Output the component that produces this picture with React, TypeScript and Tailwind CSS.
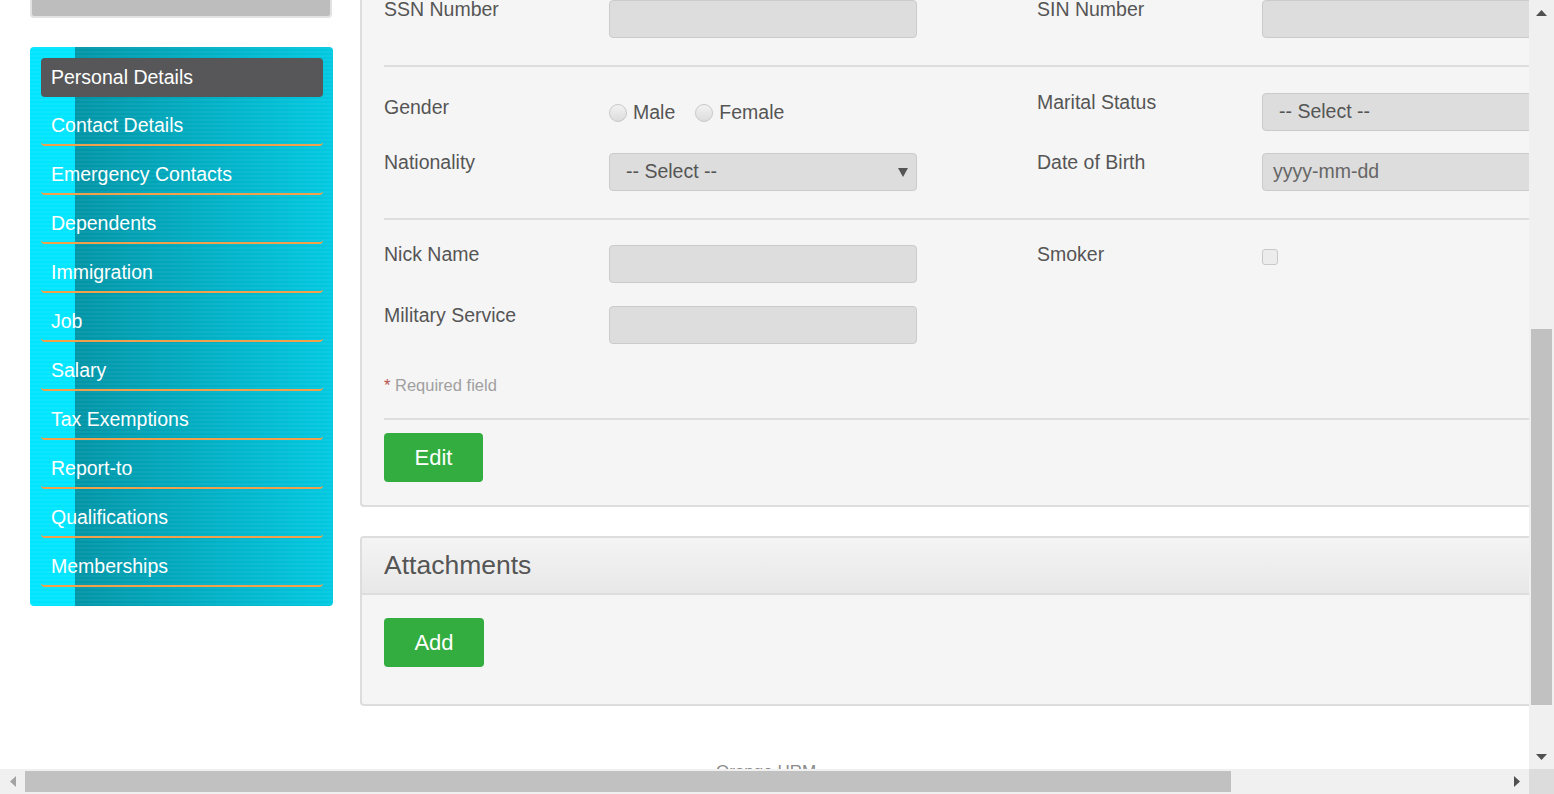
import React from 'react';

const menuItems = [
  'Contact Details',
  'Emergency Contacts',
  'Dependents',
  'Immigration',
  'Job',
  'Salary',
  'Tax Exemptions',
  'Report-to',
  'Qualifications',
  'Memberships',
];

const TextInput = ({ placeholder }: { placeholder?: string }) => (
  <div className="w-[308px] h-[38px] shrink-0 rounded-[4px] border border-[#cbcbcb] bg-[#dddddd] flex items-center pl-[10px] text-[19.5px] text-[#666]">
    {placeholder}
  </div>
);

const SelectBox = ({ arrow = true }: { arrow?: boolean }) => (
  <div className="w-[308px] h-[38px] shrink-0 rounded-[4px] border border-[#cbcbcb] bg-[#dddddd] flex items-center justify-between pl-[16px] pr-[8px] text-[19.5px] text-[#555]">
    <span>-- Select --</span>
    {arrow && (
      <svg width="10" height="9" viewBox="0 0 10 9">
        <polygon points="0,0 10,0 5,9" fill="#555" />
      </svg>
    )}
  </div>
);

const Label = ({ children }: { children: React.ReactNode }) => (
  <div className="w-[225px] shrink-0 leading-[18px] text-[19.5px] text-[#555]">{children}</div>
);

const Radio = ({ label }: { label: string }) => (
  <label className="flex items-center gap-[6px] mr-[20px]">
    <span className="w-[18px] h-[18px] rounded-full border border-[#c8c8c8] bg-[linear-gradient(180deg,#f2f2f2,#dcdcdc)]" />
    <span className="text-[19.5px] text-[#555]">{label}</span>
  </label>
);

const Divider = () => <div className="h-[2px] bg-[#dddddd]" />;

export default function App() {
  return (
    <div className="w-[1554px] h-[794px] flex flex-col overflow-hidden bg-white font-['Liberation_Sans',Arial,sans-serif]">
      <div className="flex flex-1 min-h-0">
        {/* page content */}
        <div className="w-[1529px] h-[769px] overflow-hidden flex">
          {/* Left column */}
          <div className="ml-[30px] w-[303px] shrink-0 flex flex-col">
            <div className="w-[302px] h-[18px] bg-[#bdbdbd] border-x-2 border-b-2 border-[#e2e2e2] rounded-b-[4px]" />
            <nav className="mt-[29px] rounded-[4px] pt-[11px] pl-[11px] pr-[10px] pb-[19px] bg-[repeating-linear-gradient(180deg,rgba(255,255,255,0.05)_0px,rgba(255,255,255,0.05)_2px,transparent_2px,transparent_4px),linear-gradient(90deg,#00e5ff_0px,#00e5ff_45px,#0094a6_45px,#00c9e1_100%)]">
              <div className="h-[39px] flex items-center pl-[10px] rounded-[4px] bg-[#575759] text-white text-[19.5px]">
                Personal Details
              </div>
              {menuItems.map((item) => (
                <div
                  key={item}
                  className="h-[49px] pt-[18px] pl-[10px] border-b-2 border-[#f2a04a] rounded-b-[4px] text-white text-[19.5px] leading-[21px]"
                >
                  {item}
                </div>
              ))}
            </nav>
          </div>

          {/* Main column */}
          <div className="ml-[27px] w-[1200px] shrink-0 flex flex-col">
            <div className="border-l-2 border-b-2 border-[#dddddd] rounded-bl-[4px] bg-[#f5f5f5] pl-[22px]">
              {/* SSN / SIN */}
              <div className="flex">
                <div className="w-[653px] shrink-0 flex">
                  <Label>SSN Number</Label>
                  <TextInput />
                </div>
                <div className="flex shrink-0">
                  <Label>SIN Number</Label>
                  <TextInput />
                </div>
              </div>
              <div className="mt-[27px]">
                <Divider />
              </div>

              {/* Gender / Nationality */}
              <div className="mt-[26px] flex flex-col gap-[22px]">
                <div className="flex">
                  <div className="w-[653px] shrink-0 flex">
                    <div className="pt-[5px]">
                      <Label>Gender</Label>
                    </div>
                    <div className="h-[38px] flex items-center pt-[2px]">
                      <Radio label="Male" />
                      <Radio label="Female" />
                    </div>
                  </div>
                  <div className="flex shrink-0">
                    <Label>Marital Status</Label>
                    <SelectBox arrow={false} />
                  </div>
                </div>
                <div className="flex">
                  <div className="w-[653px] shrink-0 flex">
                    <Label>Nationality</Label>
                    <SelectBox />
                  </div>
                  <div className="flex shrink-0">
                    <Label>Date of Birth</Label>
                    <TextInput placeholder="yyyy-mm-dd" />
                  </div>
                </div>
              </div>
              <div className="mt-[27px]">
                <Divider />
              </div>

              {/* Nick name / Smoker / Military */}
              <div className="mt-[25px] flex flex-col gap-[23px]">
                <div className="flex">
                  <div className="w-[653px] shrink-0 flex">
                    <Label>Nick Name</Label>
                    <TextInput />
                  </div>
                  <div className="flex shrink-0">
                    <Label>Smoker</Label>
                    <span className="mt-[4px] w-[16px] h-[16px] rounded-[3px] border border-[#c8c8c8] bg-[#ececec]" />
                  </div>
                </div>
                <div className="flex">
                  <div className="w-[653px] shrink-0 flex">
                    <Label>Military Service</Label>
                    <TextInput />
                  </div>
                </div>
              </div>

              <p className="mt-[33px] text-[16.5px] leading-[17px] text-[#a0a0a0]">
                <span className="text-[#b5524f]">*</span> Required field
              </p>
              <div className="mt-[24px]">
                <Divider />
              </div>

              <div className="pt-[13px] pb-[23px]">
                <button className="w-[99px] h-[49px] rounded-[4px] bg-[#33ad40] text-white text-[22px]">
                  Edit
                </button>
              </div>
            </div>

            {/* Attachments */}
            <div className="mt-[29px] border-2 border-[#dddddd] rounded-[4px] bg-[#f5f5f5]">
              <div className="h-[57px] flex items-center pl-[22px] border-b-2 border-[#dddddd] bg-[linear-gradient(180deg,#f4f4f4,#e8e8e8)]">
                <h2 className="text-[26.5px] text-[#555]">Attachments</h2>
              </div>
              <div className="pl-[22px] pt-[23px] pb-[37px]">
                <button className="w-[100px] h-[49px] rounded-[4px] bg-[#33ad40] text-white text-[22px]">
                  Add
                </button>
              </div>
            </div>

            <div className="mt-[57px] pl-[356px] text-[17px] leading-none text-[#8a8a8a]">Orange HRM</div>
          </div>
        </div>

        {/* vertical scrollbar */}
        <div className="w-[25px] h-[769px] bg-[#f0f0f0] flex flex-col items-center">
          <div className="h-[25px] w-full flex items-center justify-center">
            <svg width="11" height="6" viewBox="0 0 11 6">
              <polygon points="0,6 11,6 5.5,0" fill="#505050" />
            </svg>
          </div>
          <div className="mt-[304px] w-[21px] h-[376px] bg-[#c1c1c1]" />
          <div className="flex-1" />
          <div className="h-[25px] w-full flex items-center justify-center">
            <svg width="11" height="6" viewBox="0 0 11 6">
              <polygon points="0,0 11,0 5.5,6" fill="#505050" />
            </svg>
          </div>
        </div>
      </div>

      {/* horizontal scrollbar */}
      <div className="h-[25px] flex bg-[#f0f0f0]">
        <div className="w-[25px] flex items-center justify-center">
          <svg width="6" height="11" viewBox="0 0 6 11">
            <polygon points="6,0 6,11 0,5.5" fill="#a3a3a3" />
          </svg>
        </div>
        <div className="self-center w-[1206px] h-[21px] bg-[#c1c1c1]" />
        <div className="flex-1" />
        <div className="w-[25px] flex items-center justify-center">
          <svg width="6" height="11" viewBox="0 0 6 11">
            <polygon points="0,0 0,11 6,5.5" fill="#505050" />
          </svg>
        </div>
        <div className="w-[25px] bg-[#dcdcdc]" />
      </div>
    </div>
  );
}
